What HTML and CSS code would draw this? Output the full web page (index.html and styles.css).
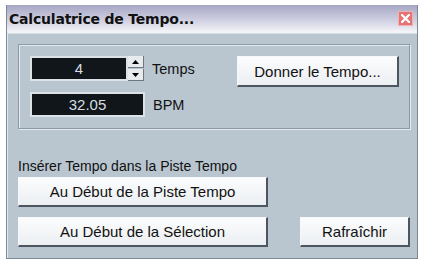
FILE: index.html
```html
<!DOCTYPE html>
<html lang="fr">
<head>
  <meta charset="UTF-8">
  <title>Calculatrice de Tempo</title>
  <link rel="stylesheet" href="styles.css">
</head>
<body>
  <div class="window">
    <div class="titlebar">
      <span class="title">Calculatrice de Tempo...</span>
      <span class="close">
        <svg width="9" height="9" viewBox="0 0 9 9">
          <path d="M1 1 L8 8 M8 1 L1 8" stroke="#fff" stroke-width="2.2" stroke-linecap="square"/>
        </svg>
      </span>
    </div>

    <div class="content">
      <!-- Tempo group -->
      <div class="group">
        <div class="fields">
          <div class="field-row">
            <div class="display short">4</div>
            <div class="spin">
              <span class="spin-btn"><svg width="7" height="4" viewBox="0 0 7 4"><path d="M0 4 L3.5 0 L7 4 Z" fill="#000"/></svg></span>
              <span class="spin-btn"><svg width="7" height="4" viewBox="0 0 7 4"><path d="M0 0 L3.5 4 L7 0 Z" fill="#000"/></svg></span>
            </div>
            <span class="label">Temps</span>
          </div>
          <div class="field-row">
            <div class="display long">32.05</div>
            <span class="label">BPM</span>
          </div>
        </div>
        <button class="btn tap">Donner le Tempo...</button>
      </div>

      <div class="insert-label">Insérer Tempo dans la Piste Tempo</div>
      <button class="btn wide first">Au Début de la Piste Tempo</button>
      <div class="bottom-row">
        <button class="btn wide">Au Début de la Sélection</button>
        <button class="btn refresh">Rafraîchir</button>
      </div>
    </div>
  </div>
</body>
</html>
```

FILE: styles.css
```css
body {
  margin: 0;
  padding: 5px 0 0 6px;
  background: #fff;
  font-family: "Liberation Sans", Arial, sans-serif;
  font-size: 14px;
  color: #111;
}

.window {
  width: 412px;
  height: 254px;
  box-sizing: border-box;
  border: 1px solid #7d8a96;
  border-top: none;
  background: #b9c6d0;
  display: flex;
  flex-direction: column;
}

.titlebar {
  height: 27px;
  background: linear-gradient(#a6a6c4, #d2d2e4 60%, #f4f4f8);
  display: flex;
  align-items: center;
  justify-content: space-between;
  padding: 0 4px 0 2px;
  border-bottom: 1px solid #f0f2f4;
}

.title {
  font-family: "DejaVu Sans", Verdana, sans-serif;
  font-weight: bold;
  font-size: 14px;
  color: #111;
  letter-spacing: -0.2px;
}

.close {
  width: 15px;
  height: 15px;
  box-sizing: border-box;
  background: #e57575;
  border: 1px solid #f2b0b0;
  display: flex;
  align-items: center;
  justify-content: center;
}

.content {
  flex: 1;
  padding: 10px 7px 0 10px;
  border-left: 1px solid #e2e8ec;
  border-top: 1px solid #d8e0e6;
}

.group {
  height: 85px;
  box-sizing: border-box;
  border: 1px solid #8c99a4;
  box-shadow: inset 1px 1px 0 #e4eaee, 1px 1px 0 #e4eaee;
  display: flex;
  justify-content: space-between;
  align-items: flex-start;
  padding: 11px 10px 0 11px;
}

.fields {
  display: flex;
  flex-direction: column;
  gap: 11px;
}

.field-row {
  display: flex;
  align-items: center;
  height: 25px;
}

.display {
  height: 25px;
  box-sizing: border-box;
  background: #11161a;
  border: 2px solid #dde2e6;
  color: #d6dde2;
  font-size: 15px;
  display: flex;
  align-items: center;
  justify-content: center;
}

.display.short {
  width: 98px;
}

.display.long {
  width: 115px;
}

.spin {
  width: 16px;
  height: 25px;
  display: flex;
  flex-direction: column;
  gap: 1px;
}

.spin-btn {
  flex: 1;
  background: #e8ebee;
  border-right: 1px solid #6d7880;
  border-bottom: 1px solid #6d7880;
  display: flex;
  align-items: center;
  justify-content: center;
}

.label {
  margin-left: 8px;
  font-size: 14.5px;
}

.btn {
  font-family: "Liberation Sans", Arial, sans-serif;
  font-size: 15px;
  color: #111;
  background: linear-gradient(#fbfcfd, #eceff2);
  border: 1px solid #f6f8fa;
  border-right: 2px solid #4d565e;
  border-bottom: 2px solid #4d565e;
  padding: 0;
  cursor: pointer;
}

.tap {
  width: 162px;
  height: 31px;
}

.insert-label {
  margin-top: 28px;
  height: 18px;
  line-height: 18px;
}

.wide {
  width: 250px;
  height: 30px;
}

.first {
  margin-top: 2px;
  display: block;
}

.bottom-row {
  margin-top: 10px;
  display: flex;
  justify-content: space-between;
}

.refresh {
  width: 110px;
  height: 30px;
}
```
